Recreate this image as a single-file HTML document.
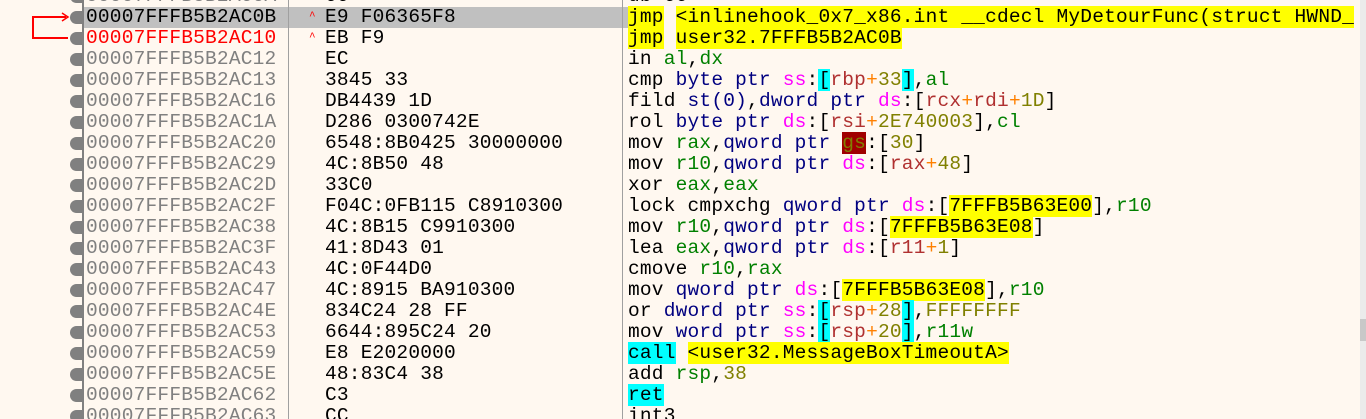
<!DOCTYPE html>
<html><head><style>
html,body{margin:0;width:1366px;height:419px;overflow:hidden;}
body{background:#fff8f0;position:relative;font-family:"Liberation Mono",monospace;font-size:19.5px;}
.r{position:absolute;left:0;width:1360px;height:21px;line-height:21px;white-space:pre;letter-spacing:0.2px}
.a{position:absolute;left:86px;color:#808080}
.b{position:absolute;left:325px;color:#000}
.d{position:absolute;left:628px;color:#000}
.dot{position:absolute;left:70px;top:4px;width:12px;height:13px;border-radius:7px 0 0 7px;background:#808080}
.vl{position:absolute;top:0;width:1px;height:419px;background:#a0a0a0}
.g{color:#008000}.m{color:#ff00ff}.n{color:#000080}.o{color:#808000}.rr{color:#b03030}.p{color:#ff8000}
.c{background:#00ffff}.y{background:#ffff00}
</style></head><body>
<div class="r" style="top:7px;left:83px;width:539px;background:#c0c0c0"></div>
<div class="r" style="top:7px;left:600px;width:28px;background:#c0c0c0"></div>
<div class="vl" style="left:82px;width:2px;background:#808080"></div>
<div class="vl" style="left:288px"></div>
<div class="vl" style="left:622px"></div>
<div style="position:absolute;left:1360px;top:0;width:6px;height:419px;background:#ebebeb"></div>
<div style="position:absolute;left:1360px;top:319px;width:6px;height:22px;background:#c8c8c8"></div>
<svg style="position:absolute;left:0;top:0" width="80" height="50"><path d="M68 38H33V17H66" fill="none" stroke="#f00" stroke-width="2"/><path d="M62 13L68 17L62 21" fill="none" stroke="#f00" stroke-width="1.5"/></svg>
<div class="r" style="top:-14px"><span class="dot"></span><span class="a">00007FFFB5B2AC0A</span><span class="b">CC</span><span class="d">db CC</span></div>
<div class="r" style="top:7px"><span class="dot"></span><span class="a" style="color:#000">00007FFFB5B2AC0B</span><span style="position:absolute;left:309px;color:#f00;font-size:11px">^</span><span class="b">E9 F06365F8</span><span class="d"><span class="y">jmp</span> <span class="y">&lt;inlinehook_0x7_x86.int __cdecl MyDetourFunc(struct HWND_</span></span></div>
<div class="r" style="top:28px"><span class="dot"></span><span class="a" style="color:#f00">00007FFFB5B2AC10</span><span style="position:absolute;left:309px;color:#f00;font-size:11px">^</span><span class="b">EB F9</span><span class="d"><span class="y">jmp</span> <span class="y">user32.7FFFB5B2AC0B</span></span></div>
<div class="r" style="top:49px"><span class="dot"></span><span class="a">00007FFFB5B2AC12</span><span class="b">EC</span><span class="d">in <span class="g">al</span>,<span class="g">dx</span></span></div>
<div class="r" style="top:70px"><span class="dot"></span><span class="a">00007FFFB5B2AC13</span><span class="b">3845 33</span><span class="d">cmp <span class="n">byte ptr</span> <span class="m">ss</span>:<span class="c">[</span><span class="rr">rbp</span><span class="p">+</span><span class="o">33</span><span class="c">]</span>,<span class="g">al</span></span></div>
<div class="r" style="top:91px"><span class="dot"></span><span class="a">00007FFFB5B2AC16</span><span class="b">DB4439 1D</span><span class="d">fild <span class="n">st(0)</span>,<span class="n">dword ptr</span> <span class="m">ds</span>:[<span class="rr">rcx</span><span class="p">+</span><span class="rr">rdi</span><span class="p">+</span><span class="o">1D</span>]</span></div>
<div class="r" style="top:112px"><span class="dot"></span><span class="a">00007FFFB5B2AC1A</span><span class="b">D286 0300742E</span><span class="d">rol <span class="n">byte ptr</span> <span class="m">ds</span>:[<span class="rr">rsi</span><span class="p">+</span><span class="o">2E740003</span>],<span class="g">cl</span></span></div>
<div class="r" style="top:133px"><span class="dot"></span><span class="a">00007FFFB5B2AC20</span><span class="b">6548:8B0425 30000000</span><span class="d">mov <span class="g">rax</span>,<span class="n">qword ptr</span> <span style="background:#a00000;color:#808000">gs</span>:[<span class="o">30</span>]</span></div>
<div class="r" style="top:154px"><span class="dot"></span><span class="a">00007FFFB5B2AC29</span><span class="b">4C:8B50 48</span><span class="d">mov <span class="g">r10</span>,<span class="n">qword ptr</span> <span class="m">ds</span>:[<span class="rr">rax</span><span class="p">+</span><span class="o">48</span>]</span></div>
<div class="r" style="top:175px"><span class="dot"></span><span class="a">00007FFFB5B2AC2D</span><span class="b">33C0</span><span class="d">xor <span class="g">eax</span>,<span class="g">eax</span></span></div>
<div class="r" style="top:196px"><span class="dot"></span><span class="a">00007FFFB5B2AC2F</span><span class="b">F04C:0FB115 C8910300</span><span class="d">lock cmpxchg <span class="n">qword ptr</span> <span class="m">ds</span>:[<span class="y">7FFFB5B63E00</span>],<span class="g">r10</span></span></div>
<div class="r" style="top:217px"><span class="dot"></span><span class="a">00007FFFB5B2AC38</span><span class="b">4C:8B15 C9910300</span><span class="d">mov <span class="g">r10</span>,<span class="n">qword ptr</span> <span class="m">ds</span>:[<span class="y">7FFFB5B63E08</span>]</span></div>
<div class="r" style="top:238px"><span class="dot"></span><span class="a">00007FFFB5B2AC3F</span><span class="b">41:8D43 01</span><span class="d">lea <span class="g">eax</span>,<span class="n">qword ptr</span> <span class="m">ds</span>:[<span class="rr">r11</span><span class="p">+</span><span class="o">1</span>]</span></div>
<div class="r" style="top:259px"><span class="dot"></span><span class="a">00007FFFB5B2AC43</span><span class="b">4C:0F44D0</span><span class="d">cmove <span class="g">r10</span>,<span class="g">rax</span></span></div>
<div class="r" style="top:280px"><span class="dot"></span><span class="a">00007FFFB5B2AC47</span><span class="b">4C:8915 BA910300</span><span class="d">mov <span class="n">qword ptr</span> <span class="m">ds</span>:[<span class="y">7FFFB5B63E08</span>],<span class="g">r10</span></span></div>
<div class="r" style="top:301px"><span class="dot"></span><span class="a">00007FFFB5B2AC4E</span><span class="b">834C24 28 FF</span><span class="d">or <span class="n">dword ptr</span> <span class="m">ss</span>:<span class="c">[</span><span class="rr">rsp</span><span class="p">+</span><span class="o">28</span><span class="c">]</span>,<span class="o">FFFFFFFF</span></span></div>
<div class="r" style="top:322px"><span class="dot"></span><span class="a">00007FFFB5B2AC53</span><span class="b">6644:895C24 20</span><span class="d">mov <span class="n">word ptr</span> <span class="m">ss</span>:<span class="c">[</span><span class="rr">rsp</span><span class="p">+</span><span class="o">20</span><span class="c">]</span>,<span class="g">r11w</span></span></div>
<div class="r" style="top:343px"><span class="dot"></span><span class="a">00007FFFB5B2AC59</span><span class="b">E8 E2020000</span><span class="d"><span class="c">call</span> <span class="y">&lt;user32.MessageBoxTimeoutA&gt;</span></span></div>
<div class="r" style="top:364px"><span class="dot"></span><span class="a">00007FFFB5B2AC5E</span><span class="b">48:83C4 38</span><span class="d">add <span class="g">rsp</span>,<span class="o">38</span></span></div>
<div class="r" style="top:385px"><span class="dot"></span><span class="a">00007FFFB5B2AC62</span><span class="b">C3</span><span class="d"><span class="c">ret</span></span></div>
<div class="r" style="top:406px"><span class="dot"></span><span class="a">00007FFFB5B2AC63</span><span class="b">CC</span><span class="d">int3</span></div>
</body></html>
